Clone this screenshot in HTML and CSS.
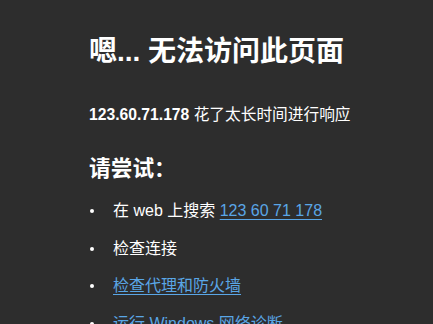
FILE: index.html
```html
<!DOCTYPE html>
<html lang="zh-CN">
<head>
<meta charset="utf-8">
<title>无法访问此页面</title>
<link rel="stylesheet" href="styles.css">
</head>
<body>
<main class="wrapper">
  <h1 class="title">嗯... 无法访问此页面</h1>
  <p class="message"><strong>123.60.71.178</strong> 花了太长时间进行响应</p>
  <h2 class="try">请尝试：</h2>
  <ul class="suggestions">
    <li class="item"><span class="dot"></span><span>在 web 上搜索 <a class="link" href="#">123 60 71 178</a></span></li>
    <li class="item"><span class="dot"></span><span>检查连接</span></li>
    <li class="item"><span class="dot"></span><a class="link" href="#">检查代理和防火墙</a></li>
    <li class="item"><span class="dot"></span><a class="link" href="#">运行 Windows 网络诊断</a></li>
  </ul>
</main>
</body>
</html>
```
FILE: styles.css
```css
html, body {
  margin: 0;
  padding: 0;
  background: #2d2d2d;
  height: 100%;
  overflow: hidden;
}
body {
  font-family: "Liberation Sans", "Noto Sans CJK SC", sans-serif;
  color: #ffffff;
}
.wrapper {
  padding: 34px 20px 0 89px;
}
.title {
  margin: 0;
  font-size: 28px;
  line-height: 36px;
  font-weight: 700;
  letter-spacing: 0;
}
.message {
  margin: 33px 0 0;
  font-size: 15.7px;
  line-height: 24px;
}
.message strong {
  font-weight: 700;
}
.try {
  margin: 27px 0 0;
  font-size: 21.7px;
  line-height: 30px;
  font-weight: 700;
}
.suggestions {
  list-style: none;
  margin: 15px 0 0;
  padding: 0;
}
.item {
  display: flex;
  align-items: center;
  font-size: 16px;
  line-height: 24px;
  margin-bottom: 13.5px;
}
.dot {
  width: 4px;
  height: 4px;
  border-radius: 50%;
  background: #ffffff;
  margin: 0 19px 0 1px;
  flex: none;
}
.link {
  color: #5aa6e6;
  text-decoration: underline;
  text-underline-offset: 3px;
}
```
